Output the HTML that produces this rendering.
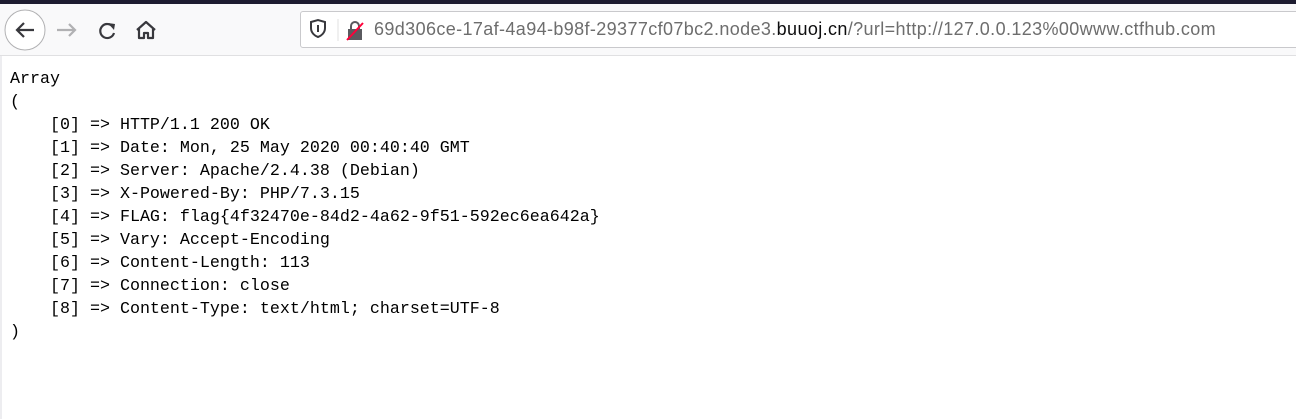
<!DOCTYPE html>
<html><head><style>
body{margin:0;width:1296px;height:419px;overflow:hidden;background:#fff;position:relative}
.top{position:absolute;left:0;top:0;width:1296px;height:4px;background:#1d1c30}
.tb{position:absolute;left:0;top:4px;width:1296px;height:51px;background:#f9f9fa;border-bottom:1px solid #e0e0e2}
.url{position:absolute;left:300px;top:11px;width:1000px;height:35px;background:#fff;border:1px solid #c9c9cc;border-radius:3px}
.ut{position:absolute;left:374px;top:19px;font:18px "Liberation Sans",sans-serif;color:#6d6d6d;white-space:nowrap;letter-spacing:0.38px}
.ut b{font-weight:normal;color:#0c0c0d}
pre{position:absolute;left:10px;top:68px;margin:0;font:16.67px/23px "Liberation Mono",monospace;color:#000}
.sb{position:absolute;left:0;top:56px;width:2px;height:363px;background:#ededf0}
</style></head><body>
<div class="top"></div>
<div class="tb"></div>
<div class="sb"></div>
<svg style="position:absolute;left:0;top:0" width="300" height="56">
<circle cx="25" cy="30" r="20" fill="#fff" stroke="#b1b1b3"/>
<path d="M34 30H17M24 23l-7 7 7 7" stroke="#38383d" stroke-width="2.2" fill="none"/>
<path d="M75 30H57M69 24l6 6-6 6" stroke="#b1b1b3" stroke-width="2.2" fill="none"/>
<path d="M113 27a7 7 0 1 0 1 6" stroke="#38383d" stroke-width="2.2" fill="none"/>
<path d="M108 23l7 1-1 6z" fill="#38383d"/>
<path d="M137 30l9-8 9 8M139 29v9h5v-5h4v5h5v-9" stroke="#38383d" stroke-width="2.2" fill="none" stroke-linejoin="round"/>
</svg>
<div class="url"></div>
<svg style="position:absolute;left:305px;top:15px" width="70" height="30">
<path d="M6 7l7-2 7 2v6c0 5-4 8-7 9-3-1-7-4-7-9z" stroke="#38383d" stroke-width="2" fill="none"/>
<path d="M13 10v7" stroke="#38383d" stroke-width="2"/>
<line x1="33" y1="4" x2="33" y2="26" stroke="#e0e0e2"/>
<path d="M43 14h14v11H43z" fill="#5a5a5f"/><path d="M46 14v-3a4 4 0 0 1 8 0v3" stroke="#5a5a5f" stroke-width="2" fill="none"/>
<path d="M42 25l16-17" stroke="#ff0039" stroke-width="2"/>
</svg>
<div class="ut">69d306ce-17af-4a94-b98f-29377cf07bc2.node3.<b>buuoj.cn</b>/?url=http://127.0.0.123%00www.ctfhub.com</div>
<pre>Array
(
    [0] =&gt; HTTP/1.1 200 OK
    [1] =&gt; Date: Mon, 25 May 2020 00:40:40 GMT
    [2] =&gt; Server: Apache/2.4.38 (Debian)
    [3] =&gt; X-Powered-By: PHP/7.3.15
    [4] =&gt; FLAG: flag{4f32470e-84d2-4a62-9f51-592ec6ea642a}
    [5] =&gt; Vary: Accept-Encoding
    [6] =&gt; Content-Length: 113
    [7] =&gt; Connection: close
    [8] =&gt; Content-Type: text/html; charset=UTF-8
)
</pre>
</body></html>
